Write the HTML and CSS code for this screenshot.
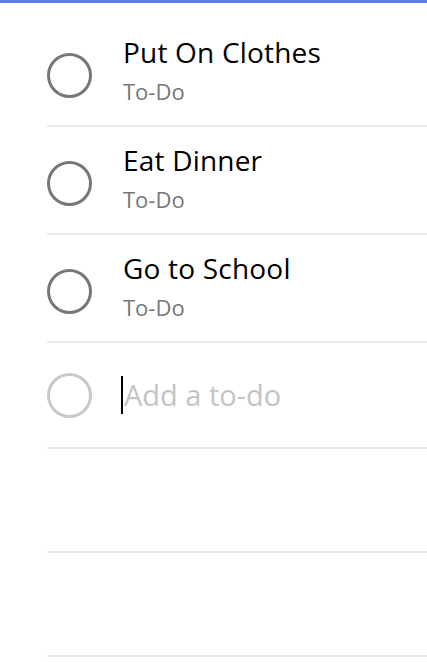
FILE: index.html
```html
<!DOCTYPE html>
<html>
<head>
<meta charset="utf-8">
<link rel="stylesheet" href="styles.css">
</head>
<body>
<div class="accent-bar"></div>
<ul class="todo-list">
  <li class="todo-item">
    <span class="check"></span>
    <div class="todo-text">
      <div class="todo-title">Put On Clothes</div>
      <div class="todo-status">To-Do</div>
    </div>
  </li>
  <li class="todo-item">
    <span class="check"></span>
    <div class="todo-text">
      <div class="todo-title">Eat Dinner</div>
      <div class="todo-status">To-Do</div>
    </div>
  </li>
  <li class="todo-item">
    <span class="check"></span>
    <div class="todo-text">
      <div class="todo-title">Go to School</div>
      <div class="todo-status">To-Do</div>
    </div>
  </li>
  <li class="add-item">
    <span class="check check-faint"></span>
    <div class="add-field"><span class="caret"></span><span class="placeholder">Add a to-do</span></div>
  </li>
  <li class="empty-item"></li>
  <li class="empty-item"></li>
</ul>
</body>
</html>
```

FILE: styles.css
```css
html, body {
  margin: 0;
  padding: 0;
  background: #ffffff;
  font-family: "Open Sans", "Noto Sans", sans-serif;
}

.accent-bar {
  height: 3px;
  background: #5b7bf2;
}

.todo-list {
  list-style: none;
  margin: 0;
  padding: 16px 0 0 0;
}

.todo-list > li {
  margin-left: 47px;
  border-bottom: 2px solid #e8e8e8;
  display: flex;
}

.todo-item {
  height: 106px;
  align-items: flex-start;
}

.check {
  flex: none;
  width: 39px;
  height: 39px;
  border: 3px solid #777777;
  border-radius: 50%;
}

.todo-item .check {
  margin-top: 34px;
}

.check-faint {
  border-color: #c8c8c8;
}

.todo-text {
  margin-left: 31px;
  padding-top: 14px;
}

.todo-title {
  font-size: 28px;
  line-height: 38px;
  color: #000000;
  letter-spacing: 0.2px;
}

.todo-status {
  margin-top: 5px;
  font-size: 22px;
  line-height: 30px;
  color: #767676;
}

.add-field {
  margin-left: 29px;
  display: flex;
  align-items: center;
  font-size: 29px;
  line-height: 38px;
}

.add-item {
  height: 104px;
  align-items: center;
}

.caret {
  width: 2px;
  height: 38px;
  background: #000000;
}

.placeholder {
  color: #c4c4c4;
  margin-left: 1px;
}

.empty-item {
  height: 102px;
}
```
